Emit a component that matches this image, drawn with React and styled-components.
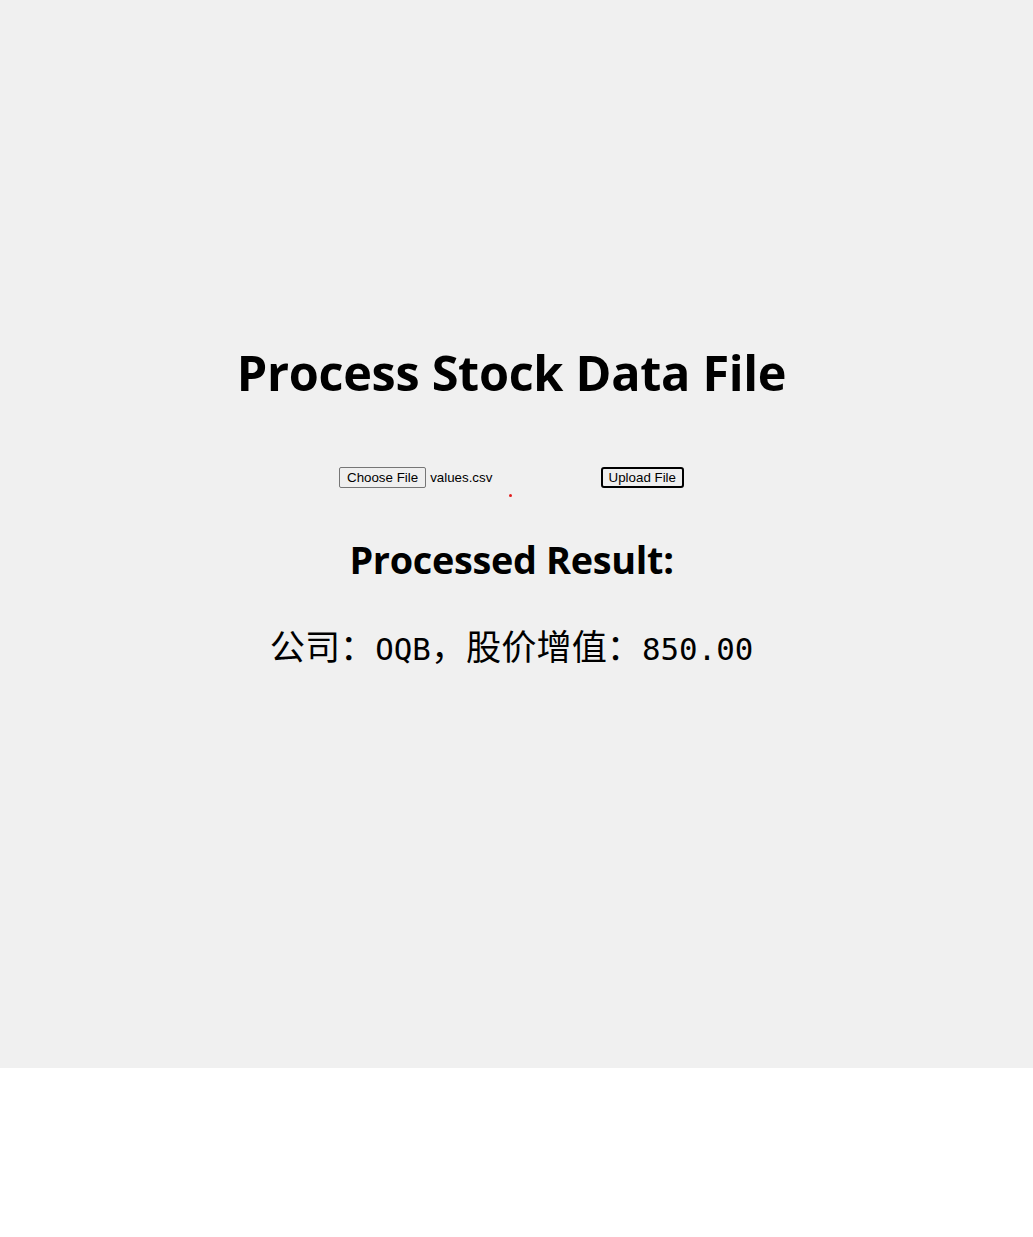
import React from "react";
import styled, { createGlobalStyle } from "styled-components";

const Global = createGlobalStyle`
  html, body { margin: 0; padding: 0; background: #ffffff; }
  * { box-sizing: border-box; }
`;

const Page = styled.div`
  height: 1068px;
  background: #f0f0f0;
  display: flex;
  flex-direction: column;
  align-items: center;
  padding: 337px 10px 0 0;
  font-family: "Open Sans", "Noto Sans", sans-serif;
  color: #000;
`;

const Title = styled.h1`
  margin: 0;
  font-size: 48.6px;
  font-weight: 700;
  line-height: 70px;
  letter-spacing: -0.3px;
`;

const UploadRow = styled.div`
  margin-top: 60px;
  display: flex;
  align-items: center;
  width: 345px;
  font-family: "Liberation Sans", Arial, sans-serif;
  font-size: 13.33px;
`;

const FileInput = styled.div`
  width: 262px;
  display: flex;
  align-items: center;
  gap: 4px;
`;

const Button = styled.button`
  font-family: "Liberation Sans", Arial, sans-serif;
  font-size: 13.33px;
  height: 21px;
  padding: 0 ${(p) => (p.$focused ? "6px" : "7px")};
  margin-left: ${(p) => (p.$focused ? "2px" : "0")};
  white-space: nowrap;
  background: #efefef;
  color: #000;
  border: ${(p) => (p.$focused ? "2px solid #000" : "1px solid #767676")};
  border-radius: ${(p) => (p.$focused ? "3px" : "2px")};
  outline: none;
  line-height: 1;
`;

const FileName = styled.span`
  font-size: 13.33px;
`;

const Dot = styled.div`
  width: 3px;
  height: 3px;
  border-radius: 50%;
  background: #e21d1d;
  margin-top: 6px;
  margin-left: -3px;
`;

const SubTitle = styled.h2`
  margin: 38px 0 0;
  font-size: 37.8px;
  font-weight: 700;
  line-height: 50px;
  letter-spacing: -0.3px;
`;

const Result = styled.p`
  margin: 38px 0 0;
  font-family: "Noto Sans CJK SC", sans-serif;
  font-size: 35.2px;
  line-height: 44px;
  white-space: nowrap;
`;

const Mono = styled.span`
  font-family: "DejaVu Sans Mono", "Liberation Mono", monospace;
  font-size: 30.8px;
`;

export default function App() {
  return (
    <>
      <Global />
      <Page>
        <Title>Process Stock Data File</Title>
        <UploadRow>
          <FileInput>
            <Button type="button">Choose File</Button>
            <FileName>values.csv</FileName>
          </FileInput>
          <Button type="button" $focused>Upload File</Button>
        </UploadRow>
        <Dot />
        <SubTitle>Processed Result:</SubTitle>
        <Result>
          公司：<Mono>OQB</Mono>，股价增值：<Mono>850.00</Mono>
        </Result>
      </Page>
    </>
  );
}
